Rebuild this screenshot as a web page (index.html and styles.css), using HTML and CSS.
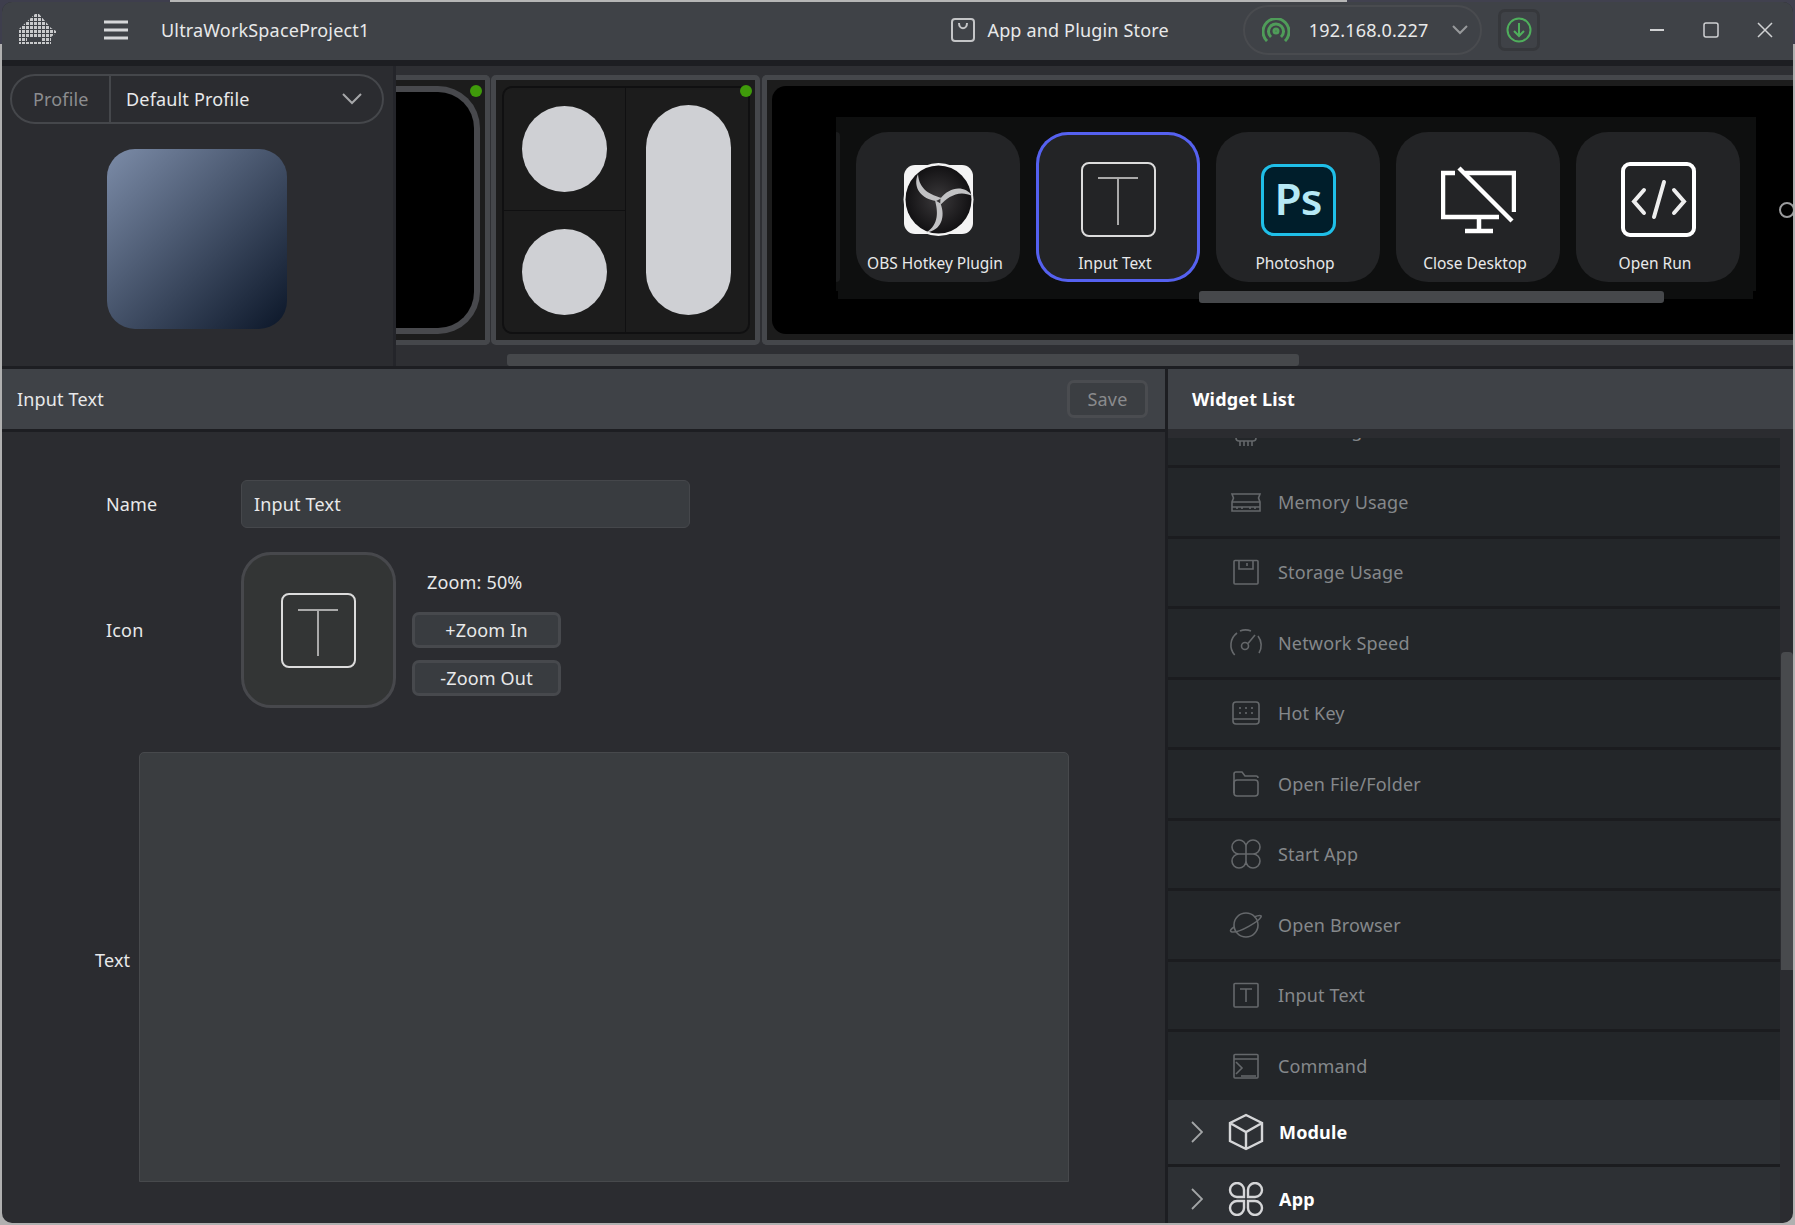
FILE: index.html
```html
<!DOCTYPE html>
<html lang="en">
<head>
    <meta charset="UTF-8">
    <title>UltraWorkSpaceProject1</title>
    <link rel="stylesheet" href="styles.css">
</head>
<body>
    <div class="window">
        <!-- title bar -->
        <header class="titlebar">
            <svg class="logo" width="40" height="32" viewBox="0 0 40 32">
                <defs>
                    <pattern id="dots" width="4" height="4" patternUnits="userSpaceOnUse">
                        <rect width="3" height="3" fill="#c9cacc"/>
                    </pattern>
                </defs>
                <path d="M17 0 L21 0 L33 14 L38 17 L38 19 L33 23 L33 30 L1 30 L1 15 Z" fill="url(#dots)"/>
                <rect x="9" y="23" width="14" height="4" fill="#3f4247"/>
            </svg>
            <svg class="burger" width="24" height="20" viewBox="0 0 24 20">
                <path d="M0 2 H24 M0 10 H24 M0 18 H24" stroke="#d6d7d9" stroke-width="3"/>
            </svg>
            <span class="project">UltraWorkSpaceProject1</span>
            <div class="store">
                <svg width="24" height="24" viewBox="0 0 24 24" fill="none" stroke="#c4c5c7" stroke-width="2">
                    <rect x="1" y="1" width="22" height="22" rx="3"/>
                    <path d="M8 5 C8 12 16 12 16 5"/>
                </svg>
                <span>App and Plugin Store</span>
            </div>
            <div class="device">
                <svg width="28" height="24" viewBox="0 0 28 24" fill="none" stroke="#4f9c59" stroke-width="3">
                    <path d="M5 23 A13 13 0 1 1 23 23"/>
                    <path d="M9 19 A7.5 7.5 0 1 1 19 19"/>
                    <circle cx="14" cy="13" r="2"/>
                </svg>
                <span class="ip">192.168.0.227</span>
                <svg width="16" height="10" viewBox="0 0 16 10" fill="none" stroke="#97999b" stroke-width="2">
                    <path d="M1 1 L8 8 L15 1"/>
                </svg>
            </div>
            <div class="download">
                <svg width="26" height="26" viewBox="0 0 26 26" fill="none" stroke="#4fae5c" stroke-width="2">
                    <circle cx="13" cy="13" r="11.5"/>
                    <path d="M13 6 V19 M8 14 L13 19 L18 14"/>
                </svg>
            </div>
            <div class="window-btns">
                <svg width="16" height="16" viewBox="0 0 16 16"><path d="M1 8 H15" stroke="#d0d1d3" stroke-width="2"/></svg>
                <svg width="16" height="16" viewBox="0 0 16 16" fill="none"><rect x="1" y="1" width="14" height="14" rx="2" stroke="#d0d1d3" stroke-width="1.5"/></svg>
                <svg width="16" height="16" viewBox="0 0 16 16"><path d="M1 1 L15 15 M15 1 L1 15" stroke="#d0d1d3" stroke-width="1.5"/></svg>
            </div>
        </header>

        <!-- profile + deck preview -->
        <section class="top">
            <aside class="profile-pane">
                <div class="profile-select">
                    <span class="profile-label">Profile</span>
                    <span class="profile-value">Default Profile</span>
                    <svg width="20" height="12" viewBox="0 0 20 12" fill="none" stroke="#a6a7a9" stroke-width="2">
                        <path d="M1 1 L10 10 L19 1"/>
                    </svg>
                </div>
                <div class="profile-thumb"></div>
            </aside>

            <div class="strip">
                <div class="cards">
                    <div class="card card-clip">
                        <span class="dot"></span>
                        <div class="clip-screen"></div>
                    </div>
                    <div class="card card-grid">
                        <span class="dot"></span>
                        <div class="key-grid">
                            <div class="key"><span class="blob"></span></div>
                            <div class="key key-tall"><span class="blob blob-tall"></span></div>
                            <div class="key"><span class="blob"></span></div>
                        </div>
                    </div>
                    <div class="card card-wide">
                        <div class="screen">
                            <div class="widgets">
                                <div class="tile-stub"></div>
                                <div class="tile">
                                    <svg class="tile-icon" viewBox="0 0 75 75">
                                        <defs>
                                            <radialGradient id="obsbg">
                                                <stop offset="0" stop-color="#3b393b"/>
                                                <stop offset="1" stop-color="#121113"/>
                                            </radialGradient>
                                        </defs>
                                        <rect x="3" y="3" width="69" height="69" rx="11" fill="#f4f4f4"/>
                                        <ellipse cx="37.5" cy="37.5" rx="35" ry="36.5" fill="#f4f4f4"/>
                                        <ellipse cx="37.5" cy="37.5" rx="33" ry="34" fill="url(#obsbg)"/>
                                        <g fill="#c2c2c4">
                                            <path d="M17 12 C11 26 21 37 35 39 L41 36 C30 33 18 28 17 12 Z"/>
                                            <path d="M17 12 C11 26 21 37 35 39 L41 36 C30 33 18 28 17 12 Z" transform="rotate(120 38 39)"/>
                                            <path d="M17 12 C11 26 21 37 35 39 L41 36 C30 33 18 28 17 12 Z" transform="rotate(240 38 39)"/>
                                        </g>
                                    </svg>
                                    <span class="tile-label">OBS Hotkey Plugin</span>
                                </div>
                                <div class="tile tile-active">
                                    <svg class="tile-icon" viewBox="0 0 75 75" fill="none">
                                        <rect x="1" y="1" width="73" height="73" rx="7" stroke="#dcdcdc" stroke-width="2"/>
                                        <path d="M17 16 H57 M37 16 V63" stroke="#a9a9a9" stroke-width="2"/>
                                    </svg>
                                    <span class="tile-label">Input Text</span>
                                </div>
                                <div class="tile">
                                    <div class="ps-icon">Ps</div>
                                    <span class="tile-label">Photoshop</span>
                                </div>
                                <div class="tile">
                                    <svg class="tile-icon" viewBox="0 0 75 75" fill="none" stroke="#fff" stroke-width="4.5">
                                        <path d="M14 11 H2 V55 H58"/>
                                        <path d="M24 11 H73 V50"/>
                                        <path d="M18 6 L71 59"/>
                                        <path d="M38 55 V68 M24 69 H52"/>
                                    </svg>
                                    <span class="tile-label">Close Desktop</span>
                                </div>
                                <div class="tile">
                                    <svg class="tile-icon" viewBox="0 0 75 75" fill="none" stroke="#fff" stroke-width="4">
                                        <rect x="2" y="2" width="71" height="71" rx="7"/>
                                        <path d="M23 28 L13 39.5 L23 51 M53 28 L63 39.5 L53 51 M43 20 L33 55" stroke="#eee" stroke-linecap="round"/>
                                    </svg>
                                    <span class="tile-label">Open Run</span>
                                </div>
                            </div>
                            <div class="inner-scroll"></div>
                            <span class="ring"></span>
                        </div>
                    </div>
                </div>
                <div class="outer-scroll"></div>
            </div>
        </section>

        <section class="bottom">
            <!-- editor for the selected widget -->
            <div class="editor">
                <div class="pane-head">
                    <span>Input Text</span>
                    <button class="save">Save</button>
                </div>
                <div class="form">
                    <div class="form-row">
                        <label class="field-label">Name</label>
                        <input class="name-input" type="text" value="Input Text">
                    </div>
                    <div class="form-row icon-row">
                        <label class="field-label">Icon</label>
                        <div class="icon-box">
                            <svg width="75" height="75" viewBox="0 0 75 75" fill="none">
                                <rect x="1" y="1" width="73" height="73" rx="7" stroke="#dcdcdc" stroke-width="2"/>
                                <path d="M17 17 H57 M37 17 V63" stroke="#a9a9a9" stroke-width="2"/>
                            </svg>
                        </div>
                        <div class="zoom-col">
                            <span class="zoom-value">Zoom: 50%</span>
                            <button class="zoom-btn">+Zoom In</button>
                            <button class="zoom-btn">-Zoom Out</button>
                        </div>
                    </div>
                    <div class="text-row">
                        <label class="text-label">Text</label>
                        <textarea class="text-input"></textarea>
                    </div>
                </div>
            </div>

            <!-- widget list -->
            <div class="widget-pane">
                <div class="pane-head pane-head-bold">Widget List</div>
                <div class="list-gap"></div>
                <div class="rows">
                    <div class="row row-first">
                        <svg class="row-icon" viewBox="0 0 36 36" fill="none">
                            <rect x="8" y="8" width="20" height="20" rx="3"/>
                            <path d="M12 28 V33 M16 28 V33 M20 28 V33 M24 28 V33"/>
                        </svg>
                        <span>CPU Usage</span>
                    </div>
                    <div class="row">
                        <svg class="row-icon" viewBox="0 0 36 36" fill="none">
                            <path d="M4 10 H32 L30.5 14 L32 18 V27 H4 V18 L5.5 14 Z"/>
                            <path d="M4 18 H32 M4 23 H32 M9 23 V25 M14 23 V25 M22 23 V25 M27 23 V25"/>
                        </svg>
                        <span>Memory Usage</span>
                    </div>
                    <div class="row">
                        <svg class="row-icon" viewBox="0 0 36 36" fill="none">
                            <rect x="6" y="6.5" width="24" height="23.5" rx="1"/>
                            <path d="M11 6.5 V15 H25 V6.5 M19 9 V12"/>
                        </svg>
                        <span>Storage Usage</span>
                    </div>
                    <div class="row">
                        <svg class="row-icon" viewBox="0 0 36 36" fill="none">
                            <path d="M6.7 30 A15 15 0 0 1 9 8 M12 6 A15 15 0 0 1 23 6 M30 11 A15 15 0 0 1 31 28"/>
                            <circle cx="17" cy="21" r="3.5"/>
                            <path d="M20 18.5 L27 10"/>
                        </svg>
                        <span>Network Speed</span>
                    </div>
                    <div class="row">
                        <svg class="row-icon" viewBox="0 0 36 36" fill="none">
                            <rect x="5" y="7" width="26" height="22" rx="3"/>
                            <path d="M12 12 V14 M18 12 V14 M24 12 V14 M12 17 V19 M18 17 V19 M24 17 V19 M5 24 H31"/>
                        </svg>
                        <span>Hot Key</span>
                    </div>
                    <div class="row">
                        <svg class="row-icon" viewBox="0 0 36 36" fill="none">
                            <path d="M6 27 V8 Q6 6 8 6 H14 L17 10 H28 Q30 10 30 12"/>
                            <rect x="6" y="14" width="24" height="16" rx="3"/>
                        </svg>
                        <span>Open File/Folder</span>
                    </div>
                    <div class="row">
                        <svg class="row-icon" viewBox="0 0 36 36" fill="none">
                            <path d="M18 11 V25 M11 18 H25 M18 11 A7 7 0 1 0 11 18 M18 11 A7 7 0 1 1 25 18 M18 25 A7 7 0 1 1 11 18 M18 25 A7 7 0 1 0 25 18"/>
                        </svg>
                        <span>Start App</span>
                    </div>
                    <div class="row">
                        <svg class="row-icon" viewBox="0 0 36 36" fill="none">
                            <circle cx="18" cy="18" r="12"/>
                            <path d="M26 10 C31 8 34 8 33 10 C31 14 12 26 4 25 C1 24 3 22 6 20"/>
                        </svg>
                        <span>Open Browser</span>
                    </div>
                    <div class="row">
                        <svg class="row-icon" viewBox="0 0 36 36" fill="none">
                            <rect x="6" y="6.5" width="24" height="23.5" rx="1"/>
                            <path d="M12 12 H24 M18 12 V25"/>
                        </svg>
                        <span>Input Text</span>
                    </div>
                    <div class="row row-last">
                        <svg class="row-icon" viewBox="0 0 36 36" fill="none">
                            <rect x="6" y="6.5" width="24" height="23.5" rx="1"/>
                            <path d="M6 11 H30 M8 14 L14 20 L8 26 M13 28 H28"/>
                        </svg>
                        <span>Command</span>
                    </div>
                </div>
                <div class="group">
                    <svg class="chevron" width="12" height="24" viewBox="0 0 12 24" fill="none">
                        <path d="M1 2 L11 12 L1 22"/>
                    </svg>
                    <svg class="group-icon" width="36" height="38" viewBox="0 0 36 38" fill="none">
                        <path d="M18 2 L34 10 V28 L18 36 L2 28 V10 Z M2 10 L18 19 L34 10 M18 19 V36"/>
                    </svg>
                    <span>Module</span>
                </div>
                <div class="group">
                    <svg class="chevron" width="12" height="24" viewBox="0 0 12 24" fill="none">
                        <path d="M1 2 L11 12 L1 22"/>
                    </svg>
                    <svg class="group-icon" width="36" height="34" viewBox="0 0 36 34" fill="none">
                        <path d="M16 15 H9 A7 7 0 1 1 16 8 Z M20 15 H27 A7 7 0 1 0 20 8 Z M16 19 H9 A7 7 0 1 0 16 26 Z M20 19 H27 A7 7 0 1 1 20 26 Z"/>
                    </svg>
                    <span>App</span>
                </div>
                <div class="list-thumb"></div>
            </div>
        </section>
    </div>
</body>
</html>
```

FILE: styles.css
```css
* {
    box-sizing: border-box;
}
html, body {
    height: 100%;
}
body {
    margin: 0;
    padding: 2px;
    overflow: hidden;
    font-family: "Noto Sans", Arial, sans-serif;
    font-size: 18px;
    letter-spacing: 0.17px;
    color: #e8e9ea;
    background: linear-gradient(to right, #3e3e4d 170px, #b6b6b6 170px, #b6b6b6 1347px, #41414f 1347px) top / 100% 44px no-repeat, #b0b0b0;
}
svg {
    display: block;
    flex: none;
}
.window {
    display: flex;
    flex-direction: column;
    height: 1221px;
    overflow: hidden;
    border-radius: 10px;
    background-color: #2b2c30;
}

/* title bar */
.titlebar {
    display: flex;
    align-items: center;
    flex: none;
    height: 64px;
    padding-bottom: 2px;
    background: #3f4247;
    border-bottom: 6px solid #1d1e22;
}
.logo {
    margin-left: 16px;
}
.burger {
    margin-left: 46px;
}
.project {
    margin-left: 33px;
}
.store {
    display: flex;
    align-items: center;
    gap: 12px;
    margin-left: 582px;
}
.device {
    display: flex;
    align-items: center;
    width: 239px;
    height: 50px;
    margin-left: 74px;
    padding-left: 17px;
    border: 2px solid #494b4f;
    border-radius: 25px;
}
.ip {
    width: 162px;
    padding-left: 19px;
}
.download {
    display: flex;
    align-items: center;
    justify-content: center;
    width: 42px;
    height: 42px;
    margin-left: 16px;
    border: 3px solid #36383c;
    border-radius: 7px;
}
.window-btns {
    display: flex;
    gap: 38px;
    margin-left: 109px;
}

/* top area */
.top {
    display: flex;
    flex: none;
    height: 303px;
    border-bottom: 3px solid #1d1e22;
}
.profile-pane {
    flex: none;
    width: 394px;
    padding: 8px 8px 0;
    border-right: 3px solid #24252a;
    background-color: #2b2c30;
}
.profile-select {
    display: flex;
    align-items: center;
    width: 374px;
    height: 50px;
    border: 2px solid #45474b;
    border-radius: 25px;
}
.profile-label {
    width: 99px;
    height: 100%;
    padding-left: 21px;
    line-height: 46px;
    color: #8c8d8f;
    border-right: 2px solid #45474b;
}
.profile-value {
    flex: 1;
    padding-left: 15px;
}
.profile-select svg {
    margin-right: 20px;
}
.profile-thumb {
    width: 180px;
    height: 180px;
    margin: 25px 0 0 97px;
    border-radius: 28px;
    background: linear-gradient(135deg, #7c8ca8, #0b1628);
}

.strip {
    position: relative;
    flex: 1;
    min-width: 0;
    overflow: hidden;
    background-color: #2e2f33;
}
.cards {
    display: flex;
    gap: 2px;
    height: 270px;
    margin-top: 9px;
}
.card {
    position: relative;
    flex: none;
    height: 270px;
    border: 5px solid #45474b;
    border-radius: 5px;
    background-color: #1c1c1c;
}
.dot {
    position: absolute;
    top: 5px;
    right: 3px;
    width: 12px;
    height: 12px;
    border-radius: 50%;
    background-color: #3f9a0a;
}
.card-clip {
    width: 94px;
    margin-right: -1px;
    padding: 6px 5px 6px 0;
    border-left: 0;
    border-radius: 0 5px 5px 0;
}
.clip-screen {
    height: 100%;
    background-color: #000;
    border: 6px solid #48494d;
    border-left: 0;
    border-radius: 0 42px 42px 0;
}
.card-grid {
    width: 269px;
    padding: 6px 5px 6px 6px;
}
.key-grid {
    display: grid;
    grid-template-columns: 121px 122px;
    grid-template-rows: 122px 121px;
    height: 248px;
    overflow: hidden;
    gap: 1px;
    border: 2px solid #101011;
    border-radius: 10px;
    background-color: #101011;
}
.key {
    display: flex;
    align-items: center;
    justify-content: center;
    background-color: #1c1c1c;
}
.key-tall {
    grid-row: span 2;
}
.blob {
    width: 85px;
    height: 86px;
    border-radius: 50%;
    background-color: #cfd0d4;
}
.blob-tall {
    height: 210px;
    margin-left: 2px;
    border-radius: 43px;
}
.card-wide {
    flex: 1;
    padding: 6px 0 6px 5px;
    border-right: 0;
    border-radius: 5px 0 0 5px;
}
.screen {
    position: relative;
    height: 100%;
    padding: 31px 0 0 64px;
    background-color: #000;
    border-radius: 14px 0 0 14px;
}
.widgets {
    position: relative;
    display: flex;
    align-items: flex-start;
    gap: 16px;
    width: 920px;
    height: 174px;
    padding-top: 15px;
    background-color: #0e0f0f;
}
.widgets::after {
    content: "";
    position: absolute;
    top: 100%;
    left: 2px;
    right: 3px;
    height: 8px;
    background-color: #0e0f0f;
}
.tile-stub {
    width: 4px;
    height: 150px;
    border-radius: 0 6px 6px 0;
    background-color: #1b1c1d;
}
.tile {
    display: flex;
    flex-direction: column;
    align-items: center;
    flex: none;
    width: 164px;
    height: 150px;
    padding-top: 30px;
    border-radius: 32px;
    background-color: #232426;
}
.tile-active {
    box-shadow: inset 0 0 0 3px #5561f0;
}
.tile-icon {
    width: 75px;
    height: 75px;
}
.tile-label {
    position: relative;
    z-index: 1;
    margin-top: 14px;
    padding-right: 6px;
    font-size: 15.5px;
    letter-spacing: 0;
    line-height: 24px;
    white-space: nowrap;
}
.ps-icon {
    width: 75px;
    height: 72px;
    margin: 2px 0 1px;
    border: 3px solid #1fbfe8;
    border-radius: 13px;
    background-color: #001e2b;
    color: #b6e9f6;
    font-size: 44px;
    font-weight: 600;
    letter-spacing: -1px;
    line-height: 62px;
    text-align: center;
}
.inner-scroll {
    position: absolute;
    top: 205px;
    left: 427px;
    width: 465px;
    height: 12px;
    border-radius: 3px;
    background-color: #46484b;
}
.ring {
    position: absolute;
    top: 116px;
    right: -2px;
    width: 16px;
    height: 16px;
    border: 2px solid #9a9b9d;
    border-radius: 50%;
}
.outer-scroll {
    position: absolute;
    top: 288px;
    left: 111px;
    width: 792px;
    height: 12px;
    border-radius: 3px;
    background-color: #46484b;
}

/* bottom area */
.bottom {
    display: flex;
    flex: 1;
    min-height: 0;
}
.pane-head {
    display: flex;
    align-items: center;
    justify-content: space-between;
    flex: none;
    height: 60px;
    padding: 0 17px 0 15px;
    background-color: #3f4247;
}
.pane-head-bold {
    padding-left: 24px;
    font-weight: 700;
    color: #fff;
}
.editor {
    flex: none;
    width: 1166px;
    border-right: 3px solid #1d1e22;
}
.editor .pane-head {
    height: 63px;
    border-bottom: 3px solid #1d1e22;
}
.save {
    width: 81px;
    height: 38px;
    padding: 0;
    font: inherit;
    letter-spacing: inherit;
    color: #8a8b8d;
    background-color: #3b3e42;
    border: 3px solid #4a4c50;
    border-radius: 7px;
}
.form {
    padding: 48px 0 0;
}
.form-row {
    display: flex;
    align-items: center;
    padding-left: 104px;
}
.field-label {
    flex: none;
    width: 135px;
}
.name-input {
    width: 449px;
    height: 48px;
    padding: 0 12px;
    font: inherit;
    letter-spacing: inherit;
    color: #e8e9ea;
    background-color: #393c40;
    border: 1px solid #45474b;
    border-radius: 6px;
    outline: none;
}
.icon-row {
    margin-top: 24px;
}
.icon-box {
    display: flex;
    align-items: center;
    justify-content: center;
    width: 155px;
    height: 156px;
    border: 3px solid #47484c;
    border-radius: 30px;
    background-color: #333535;
}
.zoom-col {
    display: flex;
    flex-direction: column;
    align-self: flex-start;
    gap: 12px;
    width: 149px;
    margin: 17px 0 0 16px;
}
.zoom-value {
    height: 31px;
    padding-left: 15px;
    line-height: 26px;
}
.zoom-btn {
    height: 36px;
    padding: 0;
    font: inherit;
    letter-spacing: inherit;
    color: #e8e9ea;
    background-color: #393c40;
    border: 3px solid #47494d;
    border-radius: 7px;
}
.text-row {
    display: flex;
    align-items: center;
    gap: 8px;
    margin: 44px 0 0 93px;
}
.text-label {
    flex: none;
    width: 36px;
    padding-bottom: 14px;
}
.text-input {
    display: block;
    width: 930px;
    height: 430px;
    background-color: #3a3d40;
    border: 1px solid #47494c;
    border-radius: 5px 5px 0 0;
    outline: none;
    resize: none;
}

.widget-pane {
    position: relative;
    flex: 1;
    min-width: 0;
    overflow: hidden;
}
.list-gap {
    position: relative;
    z-index: 1;
    height: 9px;
    background-color: #2b2c30;
}
.rows {
    height: 662px;
    margin-right: 13px;
    overflow: hidden;
}
.row {
    display: flex;
    align-items: center;
    gap: 14px;
    height: 70.5px;
    padding-left: 60px;
    color: #85888b;
    background-color: #232629;
    border-bottom: 3px solid #1b1c1f;
}
.row-first {
    margin-top: -40.5px;
}
.row-first span {
    padding-bottom: 2px;
}
.row-last {
    height: 68px;
    border-bottom: 0;
}
.row-icon {
    width: 36px;
    height: 36px;
    stroke: #65686b;
    stroke-width: 1.6;
}
.group {
    display: flex;
    align-items: center;
    flex: none;
    height: 67px;
    margin-right: 13px;
    padding-left: 23px;
    font-weight: 700;
    color: #fff;
    background-color: #2d3034;
    border-bottom: 3px solid #1b1c1f;
}
.chevron {
    stroke: #a3a5a7;
    stroke-width: 1.8;
}
.group-icon {
    margin: 0 15px 0 25px;
    stroke: #d5d6d8;
    stroke-width: 2.4;
}
.list-thumb {
    position: absolute;
    top: 283px;
    right: 0;
    width: 12px;
    height: 318px;
    border-radius: 4px 4px 0 0;
    background-color: #484a4d;
}
```
